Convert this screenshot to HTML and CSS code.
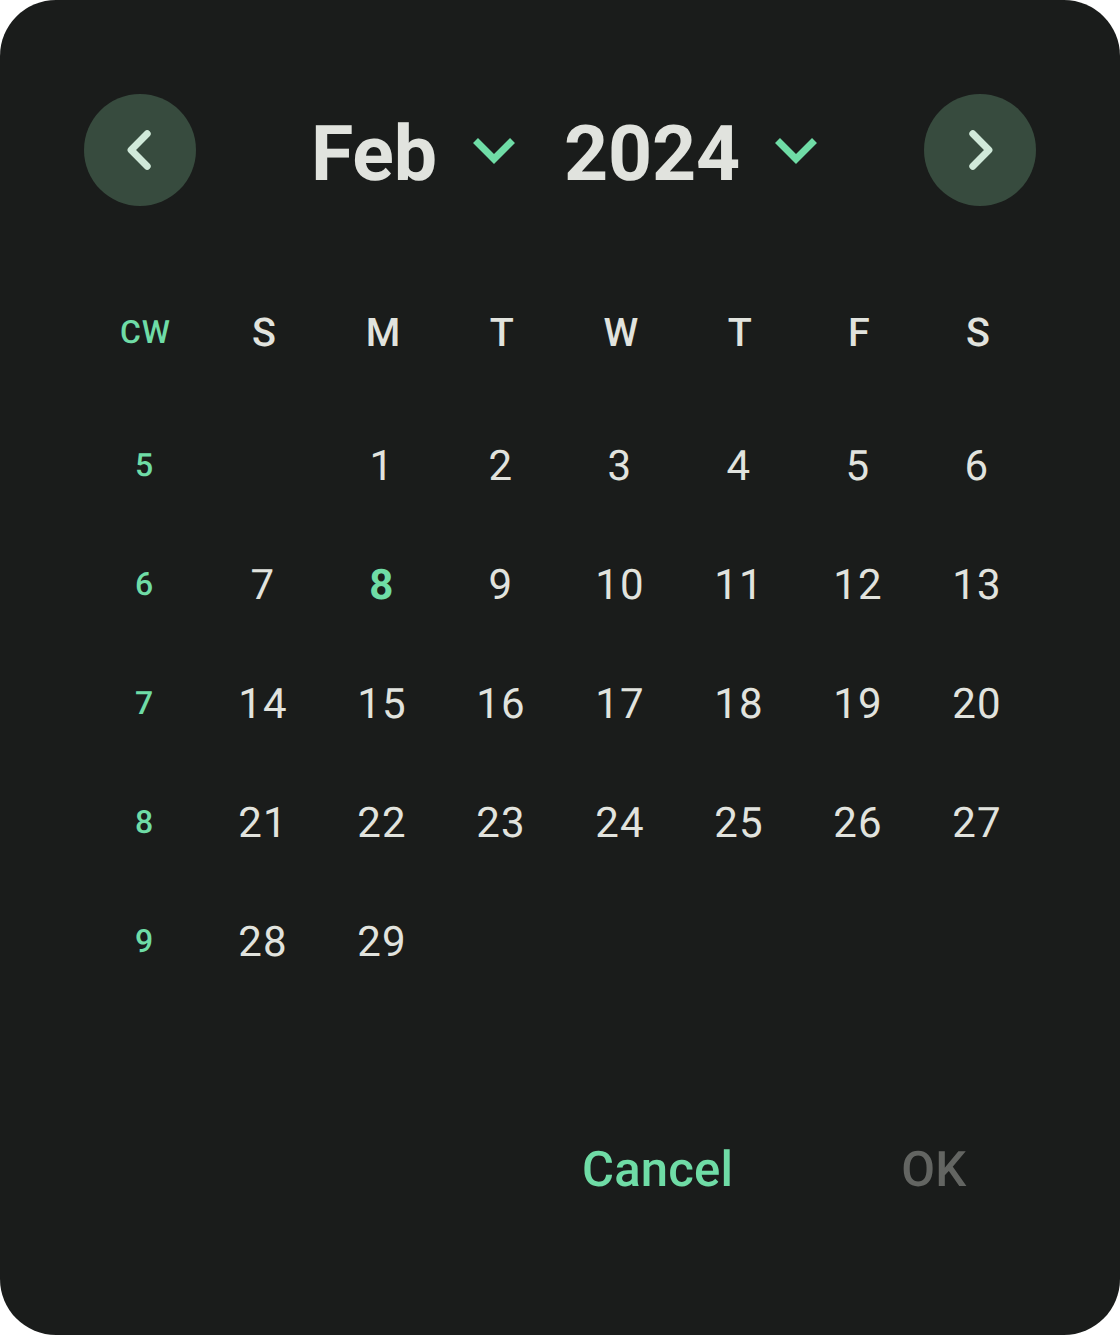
FILE: index.html
```html
<!DOCTYPE html>
<html lang="en">
<head>
<meta charset="utf-8">
<title>Date picker</title>
<link rel="stylesheet" href="styles.css">
</head>
<body>
<main class="picker">
  <header class="header">
    <button class="nav" aria-label="Previous month"><svg viewBox="0 0 112 112"><path d="M63.200 39.800L47.100 56L63.200 72.200" stroke-linecap="round" stroke-linejoin="round"/></svg></button>
    <div class="selectors">
      <button class="select month"><span>Feb</span><svg class="chevron" viewBox="0 0 44 28"><path d="M3.500 3.500L22 22L40.500 3.500"/></svg></button>
      <button class="select year"><span>2024</span><svg class="chevron" viewBox="0 0 44 28"><path d="M3.500 3.500L22 22L40.500 3.500"/></svg></button>
    </div>
    <button class="nav" aria-label="Next month"><svg viewBox="0 0 112 112"><path d="M48.800 39.800L64.900 56L48.800 72.200" stroke-linecap="round" stroke-linejoin="round"/></svg></button>
  </header>
  <section class="calendar">
    <div class="row weekdays"><span class="week">CW</span><span>S</span><span>M</span><span>T</span><span>W</span><span>T</span><span>F</span><span>S</span></div>
    <div class="row"><span class="week">5</span><span></span><span>1</span><span>2</span><span>3</span><span>4</span><span>5</span><span>6</span></div>
    <div class="row"><span class="week">6</span><span>7</span><span class="today">8</span><span>9</span><span>10</span><span>11</span><span>12</span><span>13</span></div>
    <div class="row"><span class="week">7</span><span>14</span><span>15</span><span>16</span><span>17</span><span>18</span><span>19</span><span>20</span></div>
    <div class="row"><span class="week">8</span><span>21</span><span>22</span><span>23</span><span>24</span><span>25</span><span>26</span><span>27</span></div>
    <div class="row"><span class="week">9</span><span>28</span><span>29</span></div>
  </section>
  <footer class="actions"><button class="action cancel">Cancel</button><button class="action ok" disabled>OK</button></footer>
</main>
</body>
</html>
```
FILE: styles.css
```css
* { box-sizing: border-box; }
body { margin: 0; background: #fff; font-family: Roboto, sans-serif; text-rendering: geometricPrecision; }
button { padding: 0; border: 0; background: none; font: inherit; color: inherit; text-rendering: inherit; letter-spacing: inherit; }
.picker { width: 1120px; height: 1335px; padding: 94px 84px 0; border-radius: 56px; background: #1a1c1b; color: #e1e3de; }
.header { display: flex; justify-content: space-between; height: 112px; }
.nav { width: 112px; height: 112px; border-radius: 50%; background: #374b3e; color: #d0e9d9; }
.nav svg { display: block; width: 112px; height: 112px; }
svg path { fill: none; stroke: currentColor; stroke-width: 7; }
.selectors { display: flex; width: 498px; padding-top: 8px; }
.select { display: flex; align-items: center; height: 104px; font-size: 77px; font-weight: 700; line-height: 104px; }
.select span { width: 161px; text-align: left; letter-spacing: -.2px; }
.year { margin-left: 48px; }
.year span { width: 210px; }
.chevron { width: 44px; height: 28px; margin-top: -6px; color: #6fdca6; }
.calendar { padding: 66px 0 0 1px; }
.row { display: grid; grid-template-columns: 119px repeat(7, 119px); height: 119px; align-items: center; text-align: center; font-size: 42px; line-height: 48px; letter-spacing: 1.2px; }
.row > span { padding: 4px 1px 0 0; }
.weekdays { height: 133px; padding: 0 0 14px 1px; font-size: 39.5px; font-weight: 500; }
.weekdays > span { padding: 2px 0 0; }
.row .week { padding: 0; color: #6fdca6; font-size: 32px; font-weight: 500; letter-spacing: 1px; }
.row .today { color: #6fdca6; font-weight: 700; }
.actions { display: flex; padding: 138px 0 0 498px; font-size: 49px; font-weight: 500; line-height: 64px; letter-spacing: .2px; }
.cancel { color: #6fdca6; }
.ok { margin-left: 168px; color: #636562; }
```
